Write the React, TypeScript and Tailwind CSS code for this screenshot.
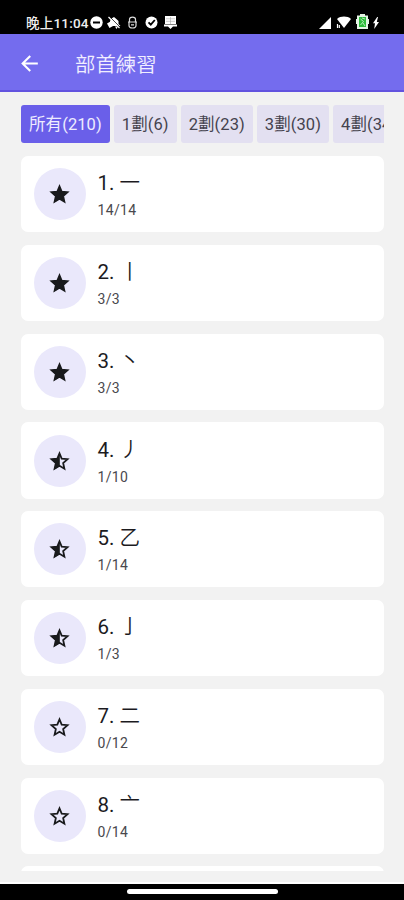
import React from 'react'
import { MdArrowBack } from 'react-icons/md'

type Radical = {
  id: number
  char: string
  done: number
  total: number
}

const filters = ['所有(210)', '1劃(6)', '2劃(23)', '3劃(30)', '4劃(34)']

const radicals: Radical[] = [
  { id: 1, char: '一', done: 14, total: 14 },
  { id: 2, char: '丨', done: 3, total: 3 },
  { id: 3, char: '丶', done: 3, total: 3 },
  { id: 4, char: '丿', done: 1, total: 10 },
  { id: 5, char: '乙', done: 1, total: 14 },
  { id: 6, char: '亅', done: 1, total: 3 },
  { id: 7, char: '二', done: 0, total: 12 },
  { id: 8, char: '亠', done: 0, total: 14 },
]

const StatusBar = () => (
  <div className="flex h-[34px] shrink-0 items-start bg-black pl-[26px] pr-[25px] pt-[15px] text-white">
    <span className="w-[64px] whitespace-nowrap text-[13.5px] font-medium leading-[16px] tracking-[0.2px] text-[#eee]">晚上11:04</span>
    <div className="flex flex-1 items-center gap-[5px] pt-[1px]">
      {/* do not disturb */}
      <svg width="13" height="13" viewBox="0 0 13 13">
        <circle cx="6.5" cy="6.5" r="6.2" fill="#fff" />
        <rect x="3" y="5.5" width="7" height="2" fill="#000" />
      </svg>
      {/* muted bell */}
      <svg width="14" height="13" viewBox="0 0 14 13" className="-ml-[1px]">
        <path d="M4.500 2.500 7 1l1.500 1.200 3 2.800v3l2 2H5L3 8V5z" fill="#fff" />
        <path d="M0 7.500 3.500 5.500 6 10 2.500 12zM8 10.500h3L9.500 13z" fill="#fff" />
        <path d="M2.500 .5 13.500 11.500" stroke="#000" strokeWidth=".8" />
        <path d="M1.500 1 12.500 12" stroke="#fff" strokeWidth="1.200" />
      </svg>
      <svg width="13" height="13" viewBox="0 0 13 13" fill="none" stroke="#ddd" strokeWidth="1.2">
        <path d="M3.500 5.500V3.200C3.500.4 9.500.4 9.500 3.200V5.500M2 6h9M3 6v3.500C3 12.800 10 12.800 10 9.500V6M5 8.800h3" />
      </svg>
      <svg width="13" height="13" viewBox="0 0 13 13" className="ml-[1px]">
        <circle cx="6.5" cy="6.5" r="6" fill="#fff" />
        <path d="m3.5 6.3 2.3 2.4L9.8 4" fill="none" stroke="#000" strokeWidth="1.8" />
      </svg>
      <svg width="13" height="13" viewBox="0 0 13 13" className="ml-[1px]">
        <path d="M1 0h11v8H1zM0 8.500h13v2H9L6.500 13 4 10.500H0z" fill="#fff" />
        <path d="M6.500 1v7M2 2.800h9M2 5.300h9" stroke="#aaa" strokeWidth=".6" />
      </svg>
    </div>
    <div className="flex items-center pt-[1px]">
      <svg width="12" height="12" viewBox="0 0 12 12">
        <path d="M12 0v12H0z" fill="#fff" />
      </svg>
      <svg width="16" height="13" viewBox="0 0 16 13" className="ml-[5px]">
        <path d="M1 3C4.500-.2 11.500-.2 15 3L8 12z" fill="#fff" />
        <path d="M1.500 8v4M3.300 9v3" stroke="#fff" strokeWidth="1.200" />
      </svg>
      <svg width="13" height="15" viewBox="0 0 13 15" className="-mt-[2px] ml-[4px]">
        <path d="M4 0h5v1.500h3V5h1v5h-1v5H1v-5H0V5h1V1.500h3z" fill="#e4f4e4" />
        <path d="M3 3h7v10H3z" fill="#2dbb3b" />
        <path d="m4.500 5 3 2.500-3 3.500M6 4l3 1M7 9l2 3" fill="none" stroke="#d8f5d8" strokeWidth=".8" />
      </svg>
      <svg width="6" height="12" viewBox="0 0 6 12" className="ml-[4px]">
        <path d="M4.200 0 0 6.200h2L1.200 12 6 5H3.800L5 0z" fill="#fff" />
      </svg>
    </div>
  </div>
)

const StarIcon = ({ done, total }: { done: number; total: number }) => (
  <svg width="25" height="25" viewBox="0 0 24 24" className="mt-[1px]">
    <path
      d="M12 4.200 14.100 9.300 19.700 9.800 15.500 13.500 16.700 18.900 12 16.100 7.300 18.900 8.500 13.500 4.300 9.800 9.900 9.300Z"
      fill={done === total ? 'currentColor' : 'none'}
      stroke="currentColor"
      strokeWidth="1.7"
    />
    {done > 0 && <path d="M12.300 3v13.300l-5.500 3.500 1.500-6L4 9.700l6-.6z" fill="currentColor" />}
  </svg>
)

const RadicalCard = (props: Radical) => {
  const { id, char, done, total } = props
  return (
    <div className="flex h-[76.3px] shrink-0 items-center rounded-[7px] bg-white pl-[12.500px]">
      <div className="flex h-[52px] w-[52px] items-center justify-center rounded-full bg-[#eae8fb] text-[#191a1c]">
        <StarIcon done={done} total={total} />
      </div>
      <div className="ml-[12px] flex flex-col pt-[1px]">
        <h2 className="text-[20.500px] leading-[28px] text-[#1c1b1f]">
          {id}. <span className="font-[350]">{char}</span>
        </h2>
        <p className="mt-[3px] text-[14px] leading-[20px] tracking-[0.350px] text-[#49484d]">
          {done}/{total}
        </p>
      </div>
    </div>
  )
}

const App = () => {
  return (
    <div className="flex h-[900px] w-[404px] flex-col overflow-hidden bg-[#f2f2f2] font-[Roboto,'Noto_Sans_CJK_TC',sans-serif]">
      <StatusBar />
      {/* Header */}
      <header className="flex h-[58px] shrink-0 items-center border-b-2 border-[#6253df] bg-[#746cee] pl-[17px] pt-[2px] text-white">
        <MdArrowBack size={25} />
        <h1 className="ml-[33px] pt-[3px] text-[20.400px] font-[350] leading-[28px] text-[#f1efff]">部首練習</h1>
      </header>
      {/* Stroke filters */}
      <div className="ml-[21px] mr-[20px] mt-[13px] flex h-[38px] shrink-0 gap-[4px] overflow-hidden">
        {filters.map((label, i) => (
          <button
            key={label}
            className={
              i === 0
                ? 'shrink-0 rounded-[3px] bg-[#6a5fe9] px-[8px] pt-[2px] text-[16.500px] tracking-[0.080px] text-[#eeecff]'
                : 'shrink-0 rounded-[3px] bg-[#e3e0f1] px-[8px] pt-[2px] text-[16.500px] tracking-[0.080px] text-[#45434e]'
            }
          >
            {label}
          </button>
        ))}
      </div>
      {/* Radical list */}
      <main className="ml-[21px] mr-[20px] mt-[13px] flex h-[715px] shrink-0 flex-col gap-[12.500px] overflow-hidden">
        {radicals.map((item) => (
          <RadicalCard key={item.id} {...item} />
        ))}
        <div className="h-[76px] shrink-0 rounded-[7px] bg-white" />
      </main>
      <footer className="mt-auto flex h-[18px] shrink-0 justify-center border-t-2 border-white bg-black pt-[5px]">
        <div className="h-[5px] w-[151px] rounded-full bg-white" />
      </footer>
    </div>
  )
}

export default App
